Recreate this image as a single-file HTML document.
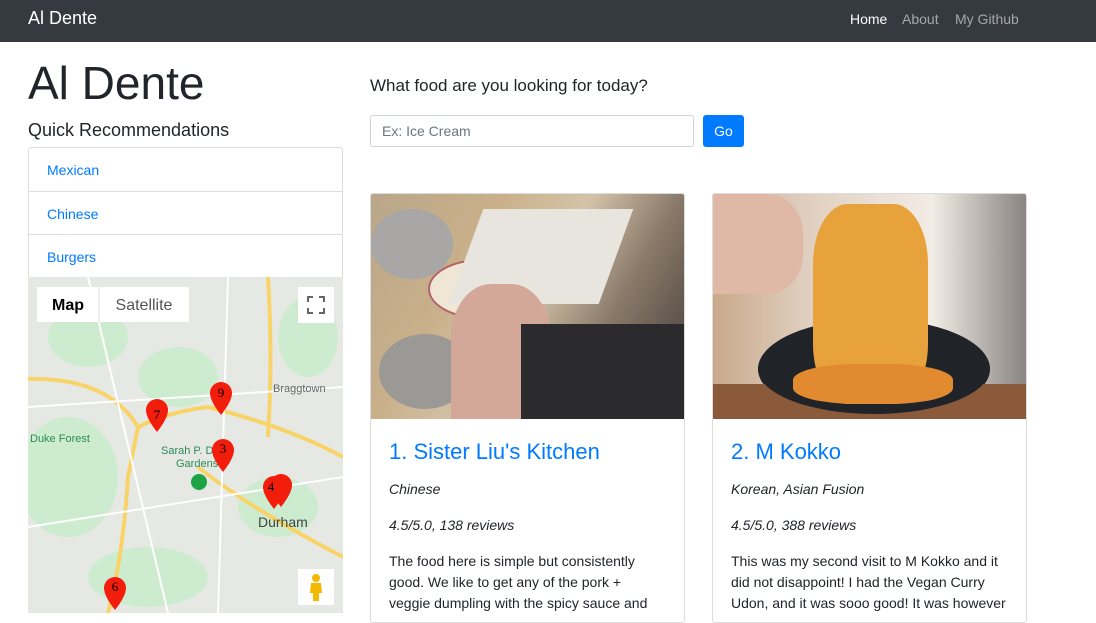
<!DOCTYPE html>
<html><head><meta charset="utf-8"><style>
*{box-sizing:border-box;margin:0;padding:0}
body{width:1096px;height:613px;overflow:hidden;font-family:"Liberation Sans",sans-serif;color:#212529;background:#fff;position:relative}
.nav{position:absolute;left:0;top:0;width:1096px;height:42px;background:#343a40}
.nav .brand{position:absolute;left:28px;top:8px;color:#fff;font-size:18px}
.nav a{position:absolute;top:11px;font-size:14px;color:rgba(255,255,255,.55)}
h1{position:absolute;left:28px;top:56px;font-size:46px;font-weight:300}
.qr{position:absolute;left:28px;top:120px;font-size:18px}
.lg{position:absolute;left:28px;top:147px;width:315px;border:1px solid #ddd;border-radius:3px}
.lg div{height:43.5px;border-bottom:1px solid #ddd;padding:14px 18px;font-size:14px;color:#007bff}
.lg div:last-child{border-bottom:none}
.map{position:absolute;left:28px;top:277px;width:315px;height:336px;background:#e8ebe6;overflow:hidden}
.q{position:absolute;left:370px;top:76px;font-size:17px}
.inp{position:absolute;left:370px;top:115px;width:324px;height:32px;border:1px solid #ced4da;border-radius:3px;padding:7px 11px;font-size:14px;color:#6c757d}
.go{position:absolute;left:703px;top:115px;width:41px;height:32px;background:#007bff;border-radius:3px;color:#fff;font-size:14px;text-align:center;line-height:32px}
.card{position:absolute;top:193px;width:315px;height:430px;border:1px solid #ddd;border-radius:3px;overflow:hidden}
.img{height:225px;position:relative;overflow:hidden}
.card h3{font-size:22px;font-weight:400;color:#007bff;margin:20px 18px 0}
.card p{font-size:14px;margin:0 18px}
.it{font-style:italic}
</style></head><body>
<div class="nav"><span class="brand">Al Dente</span>
<a style="left:850px;color:#fff">Home</a><a style="left:902px">About</a><a style="left:955px">My Github</a></div>
<h1>Al Dente</h1>
<div class="qr">Quick Recommendations</div>
<div class="lg"><div>Mexican</div><div>Chinese</div><div>Burgers</div></div>
<div class="map">
<svg width="315" height="336" viewBox="0 0 315 336">
<rect width="315" height="336" fill="#e6e8e4"/>
<g fill="#cdeccf"><ellipse cx="40" cy="200" rx="50" ry="60"/><ellipse cx="150" cy="100" rx="40" ry="30"/><ellipse cx="250" cy="230" rx="40" ry="30"/><ellipse cx="120" cy="300" rx="60" ry="30"/><ellipse cx="280" cy="60" rx="30" ry="40"/><ellipse cx="60" cy="60" rx="40" ry="30"/></g>
<g fill="none" stroke="#f8d468" stroke-width="4"><path d="M0 102 Q80 100 110 150 Q140 135 180 130 Q260 150 315 180"/><path d="M110 150 L100 200 Q95 280 80 336"/><path d="M240 0 Q245 80 240 160"/><path d="M170 190 Q220 230 315 280"/></g>
<g fill="none" stroke="#fff" stroke-width="2"><path d="M0 130 L315 110"/><path d="M0 250 L315 200"/><path d="M60 0 L140 336"/><path d="M200 0 L190 336"/></g>
<g font-family="Liberation Sans" font-size="12"><text x="2" y="165" fill="#2e8b57" font-size="11">Duke Forest</text><text x="245" y="115" fill="#666" font-size="11">Braggtown</text><text x="230" y="250" fill="#444" font-size="14">Durham</text><text x="133" y="177" fill="#2e8b57" font-size="11">Sarah P. Duke</text><text x="148" y="190" fill="#2e8b57" font-size="11">Gardens</text></g>
<g fill="#f21d0a"><path d="M129 155 q-11-14-11-22 a11 11 0 0 1 22 0 q0 8-11 22z"/><path d="M193 138 q-11-14-11-22 a11 11 0 0 1 22 0 q0 8-11 22z"/><path d="M195 195 q-11-14-11-22 a11 11 0 0 1 22 0 q0 8-11 22z"/><path d="M246 232 q-11-14-11-22 a11 11 0 0 1 22 0 q0 8-11 22z"/><path d="M253 230 q-11-14-11-22 a11 11 0 0 1 22 0 q0 8-11 22z"/><path d="M87 333 q-11-14-11-22 a11 11 0 0 1 22 0 q0 8-11 22z"/></g>
<g font-family="Liberation Serif" font-size="13" text-anchor="middle"><text x="129" y="142">7</text><text x="193" y="120">9</text><text x="195" y="176">3</text><text x="243" y="214">4</text><text x="87" y="314">6</text></g>
<circle cx="171" cy="205" r="8" fill="#1ea446"/>
<rect x="9" y="10" width="152" height="35" fill="#fff"/><line x1="71" y1="10" x2="71" y2="45" stroke="#ddd"/>
<text x="40" y="33" font-size="16" font-weight="bold" text-anchor="middle" font-family="Liberation Sans">Map</text>
<text x="116" y="33" font-size="16" fill="#555" text-anchor="middle" font-family="Liberation Sans">Satellite</text>
<rect x="270" y="10" width="36" height="36" fill="#fff"/>
<path d="M280 25v-5h5M291 20h5v5M296 31v5h-5M285 36h-5v-5" stroke="#666" stroke-width="2" fill="none"/>
<rect x="270" y="292" width="36" height="36" fill="#fff"/>
<circle cx="288" cy="301" r="4" fill="#f5b800"/><path d="M283 306h10l1 10h-3v8h-6v-8h-3z" fill="#f5b800"/>
</svg></div>
<div class="q">What food are you looking for today?</div>
<div class="inp">Ex: Ice Cream</div>
<div class="go">Go</div>
<div class="card" style="left:370px"><div class="img" style="background:linear-gradient(120deg,#b9a68a 0%,#c9b08a 30%,#d4c3a8 50%,#8a7a6a 70%,#3b3633 100%)">
<div style="position:absolute;left:0;top:15px;width:82px;height:70px;border-radius:50%;background:#a8a7a5"></div>
<div style="position:absolute;left:57px;top:65px;width:107px;height:60px;border-radius:50%;background:#efe6d6;border:2px solid #b5616a"></div>
<div style="position:absolute;left:95px;top:15px;width:150px;height:95px;background:#e8e4de;transform:skewX(-20deg)"></div>
<div style="position:absolute;left:8px;top:140px;width:92px;height:75px;border-radius:50%;background:#9b9995"></div>
<div style="position:absolute;left:80px;top:90px;width:100px;height:135px;background:#d4a898;border-radius:40% 40% 0 0"></div>
<div style="position:absolute;left:150px;top:130px;width:165px;height:95px;background:#2b2b2d"></div></div>
<h3>1. Sister Liu's Kitchen</h3>
<p class="it" style="margin-top:16px">Chinese</p>
<p class="it" style="margin-top:20px">4.5/5.0, 138 reviews</p>
<p style="margin-top:18px;line-height:21px">The food here is simple but consistently good. We like to get any of the pork + veggie dumpling with the spicy sauce and</p></div>
<div class="card" style="left:712px"><div class="img" style="background:linear-gradient(90deg,#c9a98a 0%,#e0cfc0 30%,#f2ece6 70%,#8a8482 100%)">
<div style="position:absolute;left:0;top:0;width:90px;height:100px;background:#e0b8a6;border-radius:0 40% 40% 0"></div>
<div style="position:absolute;left:45px;top:125px;width:232px;height:100px;border-radius:50%;background:#202429"></div>
<div style="position:absolute;left:0;top:190px;width:315px;height:35px;background:#8a5a3a;z-index:0"></div>
<div style="position:absolute;left:45px;top:130px;width:232px;height:90px;border-radius:50%;background:#202429"></div>
<div style="position:absolute;left:100px;top:10px;width:115px;height:200px;background:#e8a23c;border-radius:30%"></div>
<div style="position:absolute;left:80px;top:170px;width:160px;height:40px;background:#e28a30;border-radius:40%"></div></div>
<h3>2. M Kokko</h3>
<p class="it" style="margin-top:16px">Korean, Asian Fusion</p>
<p class="it" style="margin-top:20px">4.5/5.0, 388 reviews</p>
<p style="margin-top:18px;line-height:21px">This was my second visit to M Kokko and it did not disappoint! I had the Vegan Curry Udon, and it was sooo good! It was however</p></div>
</body></html>
